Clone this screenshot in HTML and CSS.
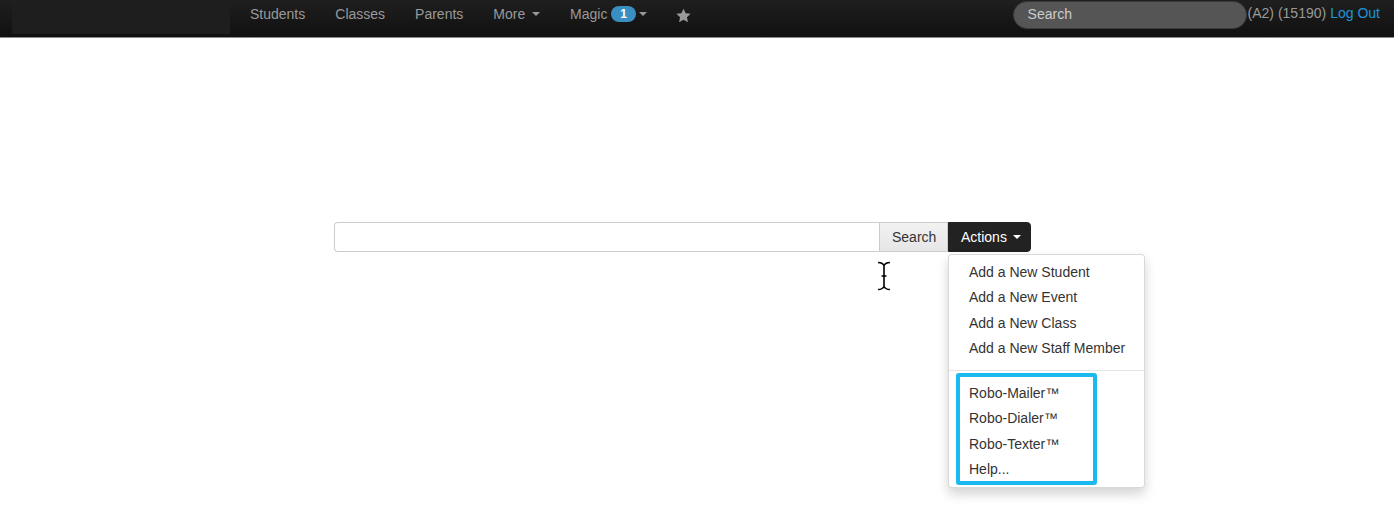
FILE: index.html
```html
<!DOCTYPE html>
<html>
<head>
<meta charset="utf-8">
<link rel="stylesheet" href="styles.css">
</head>
<body>
<header class="navbar">
  <div class="brand"></div>
  <nav class="nav">
    <a class="nav-link">Students</a>
    <a class="nav-link">Classes</a>
    <a class="nav-link">Parents</a>
    <a class="nav-link">More <span class="caret"></span></a>
    <a class="nav-link">Magic <span class="badge">1</span><span class="caret"></span></a>
    <a class="nav-link star"><svg width="15" height="15" viewBox="0 0 24 24"><path d="M12 1l3.4 7.3 8 .9-5.9 5.5 1.6 7.9L12 18.7l-7.1 3.9 1.6-7.9L.6 9.2l8-.9z" fill="#999"/></svg></a>
  </nav>
  <div class="nav-right">
    <div class="nav-search">Search</div>
    <span class="user">(A2) (15190)</span>
    <a class="logout">Log Out</a>
  </div>
</header>
<main class="main">
  <div class="input-group">
    <div class="field"></div>
    <button class="btn btn-search">Search</button>
    <div class="actions">
      <button class="btn btn-actions">Actions <span class="caret caret-white"></span></button>
      <ul class="menu">
        <li class="menu-item">Add a New Student</li>
        <li class="menu-item">Add a New Event</li>
        <li class="menu-item">Add a New Class</li>
        <li class="menu-item">Add a New Staff Member</li>
        <li class="divider"></li>
        <li class="group">
          <div class="menu-item">Robo-Mailer™</div>
          <div class="menu-item">Robo-Dialer™</div>
          <div class="menu-item">Robo-Texter™</div>
          <div class="menu-item">Help...</div>
          <div class="highlight"></div>
        </li>
      </ul>
    </div>
    <svg class="cursor" width="16" height="32" viewBox="0 0 16 32"><path d="M2 2.5c3 0 5 1 6 3c1-2 3-3 6-3M8 5.5v21M2 29.5c3 0 5-1 6-3c1 2 3 3 6 3M5.5 16h5" fill="none" stroke="#000" stroke-width="1.6"/></svg>
  </div>
</main>
</body>
</html>
```

FILE: styles.css
```css
* { box-sizing: border-box; }
html, body { margin: 0; padding: 0; background: #fff; }
body { font-family: "Liberation Sans", Arial, sans-serif; font-size: 14px; color: #333; width: 1394px; height: 528px; overflow: hidden; }

.navbar {
  height: 38px;
  display: flex;
  align-items: flex-start;
  background: linear-gradient(#1f1f1f, #101010);
  border-bottom: 1px solid #8a8a8a;
}
.brand {
  width: 218px;
  height: 31px;
  margin: 3px 0 0 12px;
  background: #1e1e1e;
}
.nav { display: flex; margin-left: 5px; }
.nav-link {
  display: flex;
  align-items: center;
  padding: 4px 15px;
  line-height: 20px;
  color: #999;
  white-space: pre;
}
.caret {
  display: inline-block;
  width: 0; height: 0;
  margin-left: 3px;
  border-top: 4px solid #999;
  border-left: 4px solid transparent;
  border-right: 4px solid transparent;
}
.caret-white { border-top-color: #fff; margin-left: 2px; }
.badge {
  display: inline-block;
  background: #3a8fc2;
  color: #fff;
  font-weight: bold;
  font-size: 12px;
  line-height: 16px;
  height: 16px;
  padding: 0 9px;
  border-radius: 8px;
}
.nav-link.star { padding: 2px 15px 0 14px; }

.nav-right {
  margin-left: auto;
  display: flex;
  align-items: flex-start;
  margin-right: 14px;
  margin-top: 1px;
}
.nav-search {
  width: 234px;
  height: 28px;
  border-radius: 14px;
  background: #555;
  border: 1px solid #3a3a3a;
  color: #ccc;
  padding-left: 14px;
  line-height: 25px;
}
.user, .logout { line-height: 25px; color: #999; }
.user { margin-left: 1px; }
.logout { color: #1e96d8; margin-left: 4px; }

.main { padding: 184px 0 0 334px; }
.input-group { display: flex; position: relative; }
.field {
  width: 545px;
  height: 30px;
  border: 1px solid #ccc;
  border-right: 0;
  border-radius: 4px 0 0 4px;
  background: #fff;
}
.btn {
  font-family: "Liberation Sans", Arial, sans-serif;
  font-size: 14px;
  height: 30px;
  margin: 0;
  border: 1px solid #ccc;
  padding: 0 12px;
  line-height: 28px;
}
.btn-search {
  width: 69px;
  background: linear-gradient(#f2f2f2, #e6e6e6);
  color: #333;
  border-radius: 0;
}
.actions { position: relative; }
.btn-actions {
  width: 83px;
  background: #222;
  color: #fff;
  border-color: #222;
  border-radius: 0 4px 4px 0;
  display: flex;
  align-items: center;
  white-space: pre;
}
.menu {
  position: absolute;
  top: 32px;
  left: 0;
  width: 197px;
  margin: 0;
  padding: 5px 0 5px;
  list-style: none;
  background: #fff;
  border: 1px solid rgba(0,0,0,.15);
  border-radius: 4px;
  box-shadow: 0 6px 12px rgba(0,0,0,.175);
}
.menu-item {
  padding: 3px 20px;
  line-height: 19.3px;
  color: #333;
  white-space: nowrap;
}
.divider { height: 1px; margin: 9px 0 10px; background: #e5e5e5; }
.group { position: relative; }
.highlight {
  position: absolute;
  top: -8px;
  left: 7px;
  width: 141px;
  bottom: -3px;
  border: 4px solid #1ab9f0;
  border-radius: 3px;
}
.cursor { position: absolute; left: 542px; top: 38px; }
```
